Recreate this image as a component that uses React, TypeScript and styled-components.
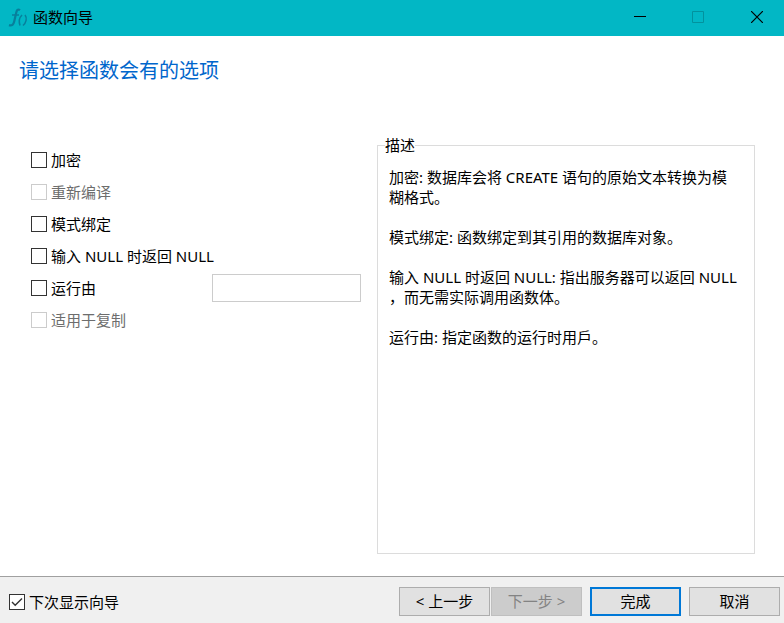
import React from "react";
import styled, { createGlobalStyle } from "styled-components";

const GlobalStyle = createGlobalStyle`
  *, *::before, *::after { box-sizing: border-box; }
  body {
    margin: 0;
    background: #ffffff;
    color: #000000;
    font-family: "Noto Sans", "Noto Sans CJK SC", sans-serif;
    font-size: 15px;
    line-height: 20px;
  }
`;

const Window = styled.div`
  display: flex;
  flex-direction: column;
  min-height: 100vh;
`;

const TitleBar = styled.header`
  display: flex;
  align-items: center;
  height: 36px;
  padding-left: 8px;
  background: #02b7c5;
`;

const AppIcon = styled.svg`
  width: 20px;
  height: 20px;
  margin-right: 5px;
`;

const WindowTitle = styled.span`
  flex: 1;
  padding-bottom: 2px;
`;

const CaptionButton = styled.button`
  display: flex;
  align-items: center;
  justify-content: center;
  width: 58px;
  height: 36px;
  padding: 0 0 2px;
  border: 0;
  background: transparent;
  color: #000000;

  &:disabled { color: #02929e; }
  &:last-child { width: 57px; padding-left: 3px; }
`;

const Content = styled.main`
  flex: 1;
  display: flex;
  flex-direction: column;
  padding: 20px 29px 22px 19px;
`;

const Heading = styled.h1`
  margin: 0;
  color: #0066cc;
  font-size: 20px;
  font-weight: 400;
  line-height: 30px;
`;

const Columns = styled.div`
  flex: 1;
  display: grid;
  grid-template-columns: 330fr 378fr;
  column-gap: 16px;
  margin-top: 49px;
  padding-left: 12px;
`;

const Options = styled.div`
  display: flex;
  flex-direction: column;
  padding-top: 9px;
`;

const OptionRow = styled.div`
  display: flex;
  align-items: center;
  justify-content: space-between;
  height: 32px;
`;

const CheckLabel = styled.label<{ $muted?: boolean }>`
  display: flex;
  align-items: center;
  gap: 4px;
  color: ${(p) => (p.$muted ? "#6d6d6d" : "#000000")};
`;

const CheckBox = styled.input`
  appearance: none;
  flex: none;
  width: 16px;
  height: 16px;
  margin: 0;
  border: 1px solid #333333;
  background: #ffffff center / 14px 14px no-repeat;

  &:disabled { border-color: #cccccc; }
  &:checked {
    background-image: url("data:image/svg+xml,%3Csvg xmlns='http://www.w3.org/2000/svg' viewBox='0 0 14 14'%3E%3Cpath d='M2 7l3.2 3.2L12 3.5' fill='none' stroke='%23333' stroke-width='1.4'/%3E%3C/svg%3E");
  }
`;

const RunAsField = styled.input`
  width: 149px;
  height: 28px;
  padding: 0 6px;
  border: 1px solid #cccccc;
  background: #ffffff;
  font: inherit;
`;

const Description = styled.fieldset`
  min-width: 0;
  margin: 0;
  padding: 12px 11px;
  border: 1px solid #dcdcdc;
`;

const Legend = styled.legend`
  margin-left: -4px;
  padding: 0;
`;

const Paragraph = styled.p`
  margin: 0 0 20px;
  white-space: nowrap;
`;

const Footer = styled.footer`
  display: flex;
  align-items: center;
  justify-content: space-between;
  height: 47px;
  padding: 3px 4px 0 9px;
  border-top: 1px solid #a0a0a0;
  background: #f0f0f0;
`;

const Actions = styled.div`
  display: flex;
  gap: 8px;
`;

const StepButtons = styled.div`
  display: flex;
  gap: 1px;
`;

const Button = styled.button<{ $primary?: boolean }>`
  width: 91px;
  height: 29px;
  padding: 0 0 2px;
  border: ${(p) => (p.$primary ? "2px solid #0078d7" : "1px solid #adadad")};
  background: #e1e1e1;
  color: #000000;
  font: inherit;

  &:disabled {
    border-color: #bfbfbf;
    background: #cccccc;
    color: #838383;
  }
`;

const options = [
  { label: "加密" },
  { label: "重新编译", disabled: true },
  { label: "模式绑定" },
  { label: "输入 NULL 时返回 NULL" },
  { label: "运行由", field: true },
  { label: "适用于复制", disabled: true },
];

export default function App() {
  return (
    <>
      <GlobalStyle />
      <Window>
        <TitleBar>
          <AppIcon viewBox="0 0 20 20" fill="none" stroke="#087f9b" aria-hidden="true">
            <path d="M12 2.200C9.800.500 8.800 2.200 8.200 4.800L6.200 13.500c-.7 3-2.200 4.600-5.200 3.600" strokeWidth="2.200" />
            <path d="M4 7h7" strokeWidth="1.500" />
            <path d="M14 7c-2.600 2.600-3.400 6.400-2 10.500M17 7c2.400 3 1.200 7.600-2 10.500" strokeWidth="1.500" />
          </AppIcon>
          <WindowTitle>函数向导</WindowTitle>
          <CaptionButton aria-label="最小化">
            <svg width="12" height="12" stroke="currentColor" shapeRendering="crispEdges"><path d="M0 5.500h12" /></svg>
          </CaptionButton>
          <CaptionButton aria-label="最大化" disabled>
            <svg width="12" height="12" fill="none" stroke="currentColor"><path d="M.5.5h11v11H.5z" /></svg>
          </CaptionButton>
          <CaptionButton aria-label="关闭">
            <svg width="12" height="12" stroke="currentColor" strokeWidth="1.200"><path d="M0 0l12 12M12 0L0 12" /></svg>
          </CaptionButton>
        </TitleBar>
        <Content>
          <Heading>请选择函数会有的选项</Heading>
          <Columns>
            <Options>
              {options.map((o) => (
                <OptionRow key={o.label}>
                  <CheckLabel $muted={o.disabled}>
                    <CheckBox type="checkbox" disabled={o.disabled} />
                    {o.label}
                  </CheckLabel>
                  {o.field && <RunAsField type="text" aria-label={o.label} />}
                </OptionRow>
              ))}
            </Options>
            <Description>
              <Legend>描述</Legend>
              <Paragraph>加密: 数据库会将 CREATE 语句的原始文本转换为模<br />糊格式。</Paragraph>
              <Paragraph>模式绑定: 函数绑定到其引用的数据库对象。</Paragraph>
              <Paragraph>输入 NULL 时返回 NULL: 指出服务器可以返回 NULL<br />，而无需实际调用函数体。</Paragraph>
              <Paragraph>运行由: 指定函数的运行时用戶。</Paragraph>
            </Description>
          </Columns>
        </Content>
        <Footer>
          <CheckLabel>
            <CheckBox type="checkbox" defaultChecked />
            下次显示向导
          </CheckLabel>
          <Actions>
            <StepButtons>
              <Button>&lt; 上一步</Button>
              <Button disabled>下一步 &gt;</Button>
            </StepButtons>
            <Button $primary>完成</Button>
            <Button>取消</Button>
          </Actions>
        </Footer>
      </Window>
    </>
  );
}
